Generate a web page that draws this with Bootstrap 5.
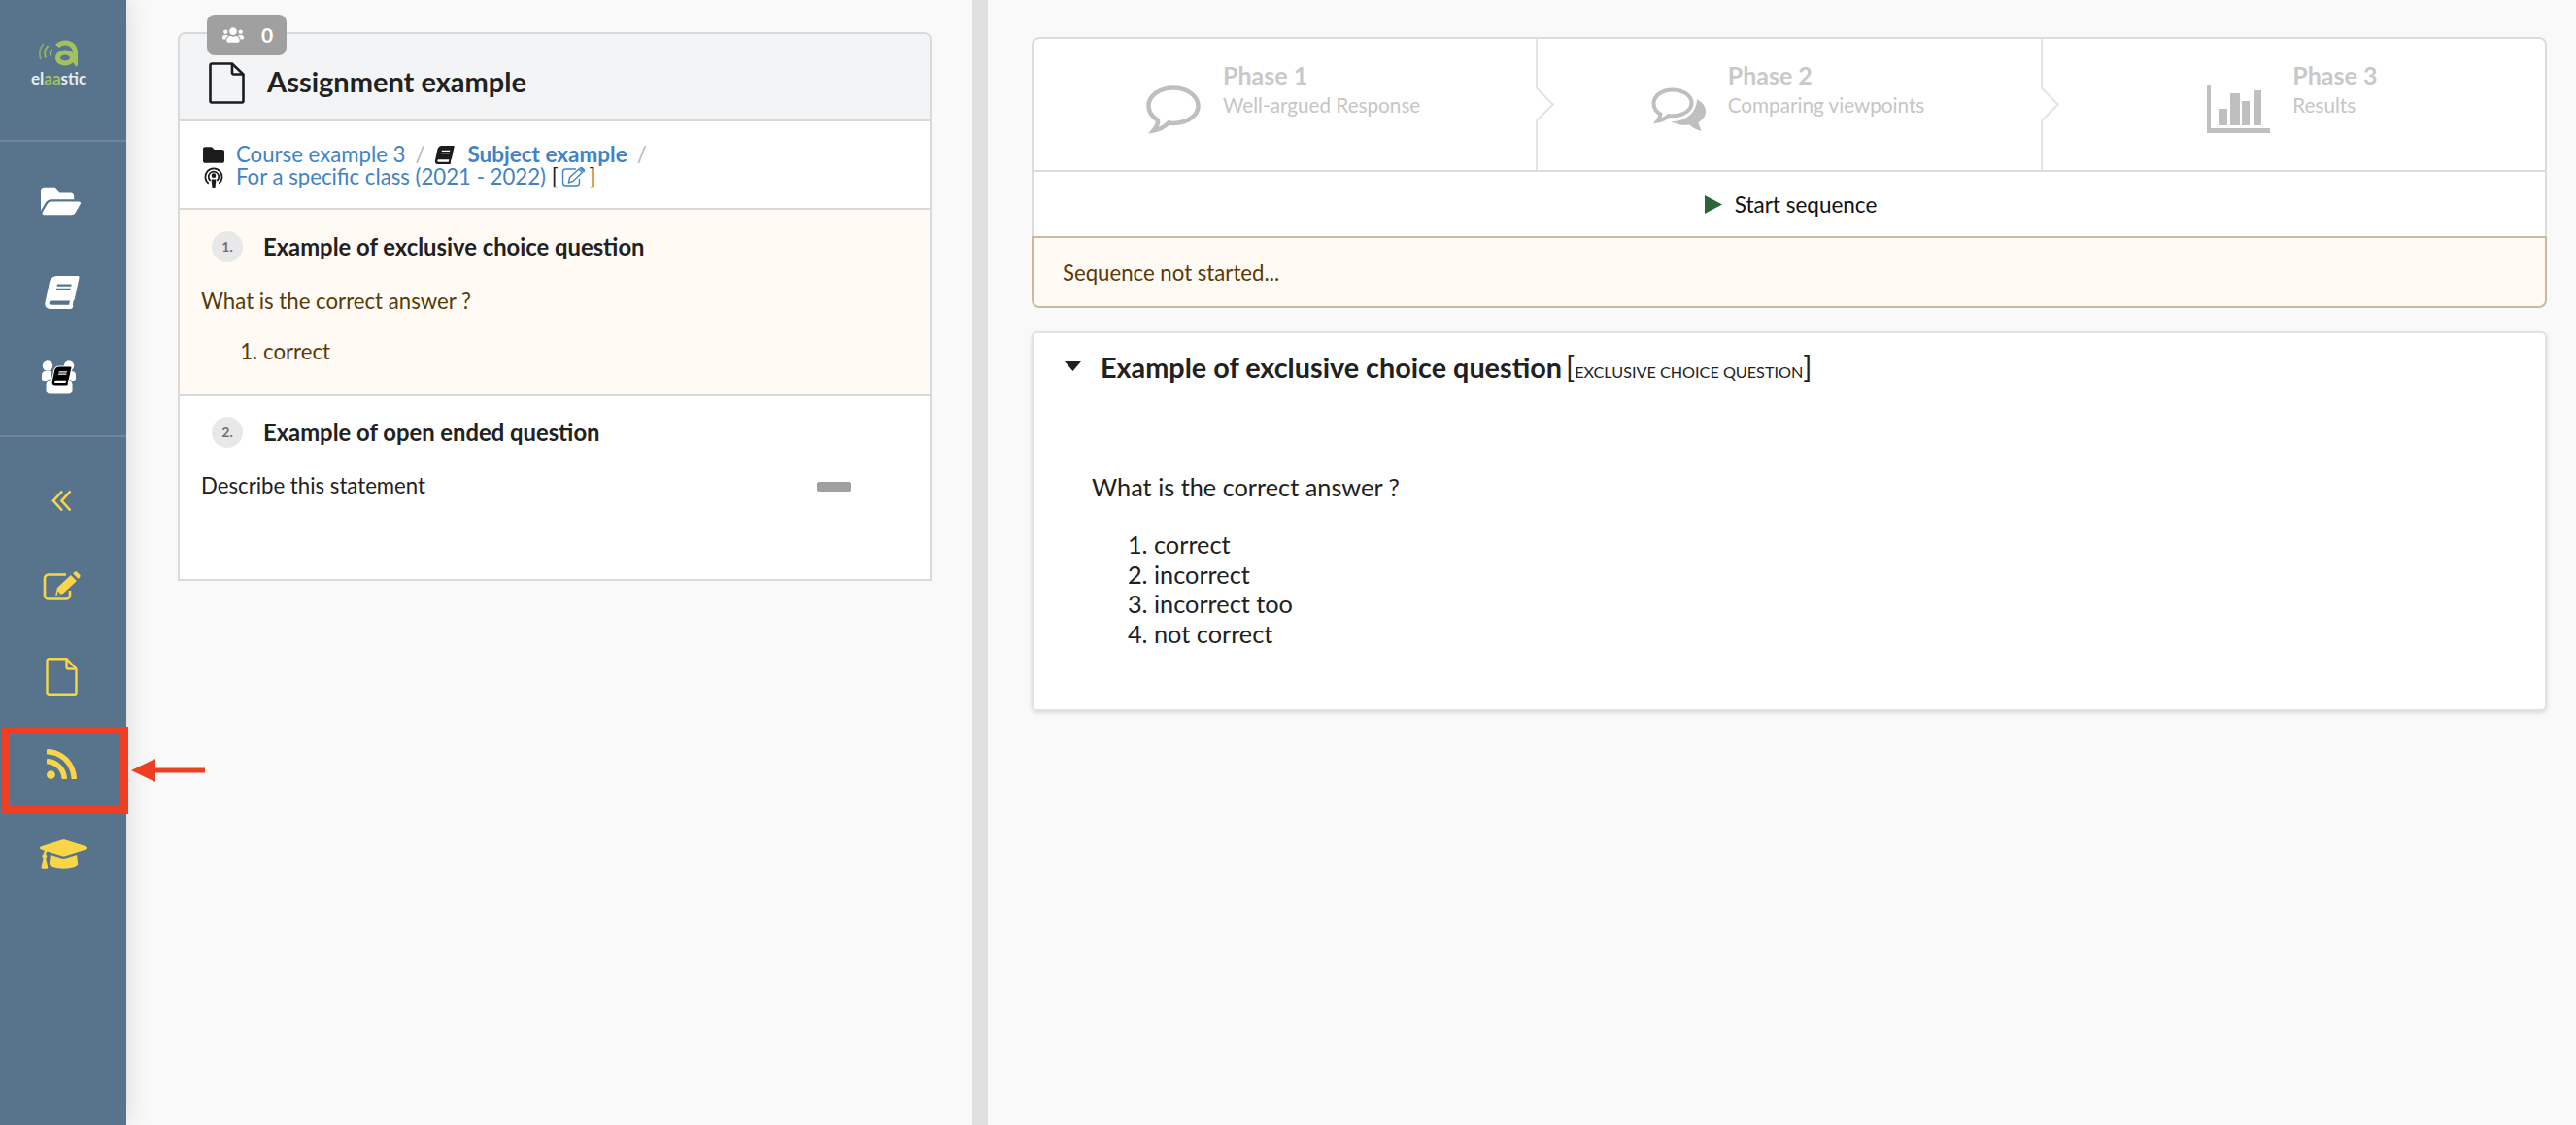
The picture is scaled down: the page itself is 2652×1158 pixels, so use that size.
<!DOCTYPE html>
<html lang="en">
<head>
<meta charset="utf-8">
<title>Assignment example</title>
<link rel="stylesheet" href="https://cdn.jsdelivr.net/npm/bootstrap@5.3.0/dist/css/bootstrap.min.css">
<style>
html,body{height:100%}
body{font-family:"Lato",sans-serif;font-size:22.2px;line-height:33px;color:#212121;background:#f9f9f9;overflow:hidden}
a{text-decoration:none;color:#4183c4}
.shell{width:2652px;height:1158px}
.sidebar{width:130px;height:1158px;background:#58748d;box-shadow:0 0 24px rgba(0,0,0,.14);z-index:2;flex:none}
.logo-zone{height:146px;border-bottom:2px solid #6e879d;padding:41px 0 0 32px}
.logo-mark{display:block;width:40px;height:28px;margin-left:8px}
.logo-word{display:block;font-size:17px;line-height:17px;font-weight:700;color:#e8edf0;margin-top:3px}
.logo-word b{color:#a3c25f;font-weight:700}
.nav-zone{height:304px;border-bottom:2px solid #6e879d}
.nv{display:block;flex:none}
.nv.w{fill:#fff}.nv.y{fill:#f9d648}
.n1{width:41px;height:31px;margin:46px 0 0 42px}
.n2{width:37px;height:34px;margin:61px 0 0 45px}
.n3{width:37px;height:35px;margin:53px 0 0 42px}
.n4{width:21px;height:23px;margin:54px 0 0 53px;fill:none!important;stroke:#f9d648;stroke-width:2.6}
.n5{width:39px;height:31px;margin:61px 0 0 44px}
.n6{width:33px;height:39px;margin:58px 0 0 47px;fill:none!important;stroke:#f9d648;stroke-width:2.4}
.n7{width:31px;height:31px;margin:55px 0 0 48px}
.n8{width:49px;height:34px;margin:60px 0 0 41px}
.left-pane{width:871px;height:1158px;flex:none;padding:33px 0 0 53px}
.split{width:16px;height:1158px;background:#e0e0e0;flex:none}
.right-pane{flex:1 1 auto;padding:38px 30px 0 45px}
.assign{width:776px;height:565px;border:2px solid #d9d9d9;border-radius:8px 8px 0 0;background:#fff;color:#212121}
.people{top:-20px;left:28px;width:82px;height:42px;background:#a0a0a0;border-radius:8px;color:#fff;font-weight:700;font-size:21px;line-height:42px;padding-left:16px;gap:18px}
.people svg{width:22px;height:20px;fill:#fff}
.head-bar{height:90px;background:#f3f4f5;border-bottom:2px solid #d9d9d9;border-radius:6px 6px 0 0;padding:10px 0 0 30px}
.head-bar svg{width:37px;height:43px;fill:none;stroke:#1b1c1d;stroke-width:2.6;margin-right:23px;margin-top:3px}
.head-bar h1{font-size:29px;line-height:36px;font-weight:700;margin:0;color:#212121}
.crumbs{height:91px;border-bottom:2px solid #d9d9d9;padding:22px 0 0 24px;font-size:22.2px;line-height:23px}
.crumbs .crow{white-space:nowrap}
.crumbs svg{display:inline-block;vertical-align:-2px;fill:#1b1c1d}
.crumbs .fw-bold{font-size:22.5px}
.ci{width:22px;height:19px;margin-right:12px}
.crumbs .podc{height:23px;vertical-align:-5px}
.cb{width:21px;height:19px;margin-right:13px}
.ce{width:24px;height:20px;margin:0 4px}
.sl{color:#b9b9b9;margin:0 10px}
.q-warn{height:192px;background:#fffaf3;border-bottom:2px solid #d9d9d9;color:#573a08}
.q-plain{height:189px}
.q-head{padding:22px 0 0 33px;gap:21px;color:#212121;font-weight:700;font-size:23.8px;line-height:32px}
.q-plain .q-head{padding-top:21px}
.num{width:32px;height:32px;border-radius:50%;background:#e8e8e8;color:#6f6f6f;font-size:14px;font-weight:700;line-height:32px;text-align:center;flex:none}
.q-text{padding:23px 0 0 22px;line-height:33px;margin:0}
.q-plain .q-text{padding-top:22px}
.q-list{margin:0;padding:20px 0 0 86px;line-height:31px}
.q-row{padding-right:81px}
.stub{width:35px;height:10px;border-radius:2px;background:#a0a0a0;margin-top:-1px}
.steps{height:139px;background:#fff;border:2px solid #dcdcdc;border-radius:8px 8px 0 0}
.stepx{flex:1 1 0;position:relative;border-right:2px solid #e4e4e4;gap:23px;padding-bottom:2px}
.stepx:last-child{border-right:0}
.stepx:not(:last-child)::after{content:"";position:absolute;top:50%;right:-14px;width:25px;height:25px;margin-top:-13px;background:#fff;border-top:2px solid #e4e4e4;border-right:2px solid #e4e4e4;transform:rotate(45deg);z-index:1}
.stepx svg{flex:none;fill:#bfbfbf;margin-top:12px}
.st-txt{margin-bottom:30px;padding-right:3px}
.st-t{font-size:25px;font-weight:700;line-height:30px;color:#c9c9c9}
.st-s{font-size:20.7px;line-height:28px;color:#c6c6c6;margin-top:2px;white-space:nowrap}
.start-row{height:66px;background:#fff;border:solid #dcdcdc;border-width:0 2px;color:#111;font-size:22.5px;gap:13px;padding-left:3px}
.tri{width:18px;height:19px;fill:#2a6535}
.msg{height:74px;background:#fffaf3;border:2px solid #c9ba9b;border-radius:0 0 8px 8px;color:#573a08;padding-left:30px}
.qcard{height:391px;margin-top:24px;background:#fff;border:2px solid #e2e2e2;border-radius:6px;box-shadow:0 2px 4px rgba(0,0,0,.13);padding:0 0 0 32px}
.qtitle{padding-top:15px;font-size:28.8px;font-weight:700;line-height:38px;color:#212121;margin:0}
.caret{width:17px;height:10px;fill:#212121;margin-right:20px;margin-top:-6px}
.qtag{font-weight:400;white-space:nowrap;margin-left:-3px;font-size:30px}
.qtag small{font-size:16.2px;text-transform:uppercase;font-weight:400;vertical-align:0}
.qbody{padding:84px 0 0 28px;font-size:25.3px;line-height:31px;color:#212121}
.qbody p{margin:0 0 28px}
.qbody ol{margin:0;padding-left:64px;line-height:30.5px}
.note-box{position:absolute;left:2px;top:748px;width:130px;height:90px;border:8px solid #ee3f24;z-index:5}
.note-arrow{position:absolute;left:135px;top:780px;width:76px;height:26px;fill:#ee3f24;z-index:5}
</style>
</head>
<body>
<div class="shell d-flex position-relative">
  <nav class="sidebar position-relative d-flex flex-column">
    <div class="logo-zone">
      <svg class="logo-mark" viewBox="0 0 40 28" fill="none" stroke="#a3c25f">
        <path d="M5 4C1 8 0 14 2 20" stroke-width="2" opacity=".6"/>
        <path d="M9.500 6C6 10 5 14 7 18.500" stroke-width="2" opacity=".8"/>
        <path d="M13.500 10c-2 2-2 4-1 6.500" stroke-width="2"/>
        <ellipse cx="27" cy="18.500" rx="7.500" ry="5.500" stroke-width="5"/>
        <path d="M19 6.500c4-5.500 18-5.500 18.500 7V21c0 2 1 3.500 2.500 5" stroke-width="5"/>
      </svg>
      <span class="logo-word">el<b>aa</b>stic</span>
    </div>
    <div class="nav-zone">
      <svg class="nv w n1" viewBox="0 64 576 384"><path d="M572.694 292.093L500.27 416.248A63.997 63.997 0 0 1 444.989 448H45.025c-18.523 0-30.064-20.093-20.731-36.093l72.424-124.155A64 64 0 0 1 152 256h399.964c18.523 0 30.064 20.093 20.73 36.093zM152 224h328v-48c0-26.51-21.49-48-48-48H272l-64-64H48C21.49 64 0 85.49 0 112v278.046l69.077-118.418C86.214 242.25 117.989 224 152 224z"/></svg>
      <svg class="nv w n2" viewBox="-20 0 560 512"><g transform="translate(90 0) skewX(-12)"><path d="M448 360V24c0-13.3-10.7-24-24-24H96C43 0 0 43 0 96v320c0 53 43 96 96 96h328c13.3 0 24-10.7 24-24v-16c0-7.5-3.5-14.3-8.9-18.7-4.2-15.4-4.2-59.3 0-74.7 5.4-4.3 8.9-11.1 8.9-18.6zM128 134c0-3.3 2.7-6 6-6h212c3.3 0 6 2.7 6 6v20c0 3.3-2.7 6-6 6H134c-3.3 0-6-2.7-6-6v-20zm0 64c0-3.3 2.7-6 6-6h212c3.3 0 6 2.7 6 6v20c0 3.3-2.7 6-6 6H134c-3.3 0-6-2.7-6-6v-20zm253.4 250H96c-17.7 0-32-14.3-32-32 0-17.6 14.4-32 32-32h285.4c-1.9 17.1-1.9 46.9 0 64z"/></g></svg>
      <svg class="nv w n3" viewBox="0 0 37 35">
        <circle cx="7" cy="5.500" r="5.200"/><circle cx="29" cy="5.500" r="5.200"/>
        <path d="M1 15c0-2.500 2-4 4-4h5l2 10H3c-1.200 0-2-.8-2-2zM26 11h6c2 0 4 1.500 4 4v4c0 1.200-.8 2-2 2h-9z"/>
        <rect x="5" y="20" width="28" height="15" rx="4.500" stroke="#58748d" stroke-width="1"/>
        <g transform="translate(15 6.500) scale(.037) skewX(-12)"><path fill="#000" stroke="#fff" stroke-width="55" paint-order="stroke" d="M448 360V24c0-13.300-10.700-24-24-24H96C43 0 0 43 0 96v320c0 53 43 96 96 96h328c13.300 0 24-10.700 24-24v-16c0-7.500-3.500-14.300-8.900-18.700-4.200-15.400-4.200-59.300 0-74.700 5.400-4.300 8.900-11.100 8.900-18.600zM128 134c0-3.300 2.700-6 6-6h212c3.300 0 6 2.700 6 6v20c0 3.300-2.700 6-6 6H134c-3.300 0-6-2.700-6-6v-20zm0 64c0-3.300 2.700-6 6-6h212c3.300 0 6 2.700 6 6v20c0 3.300-2.700 6-6 6H134c-3.300 0-6-2.700-6-6v-20zm253.400 250H96c-17.700 0-32-14.300-32-32 0-17.600 14.400-32 32-32h285.400c-1.900 17.100-1.900 46.900 0 64z"/></g>
      </svg>
    </div>
    <svg class="nv w n4" viewBox="0 0 21 23"><path d="M11 1.500L2 11.500l9 10M19.500 1.500l-9 10 9 10"/></svg>
    <svg class="nv y n5" viewBox="0 0 39 31"><path fill="none" stroke="#f9d648" stroke-width="2.600" d="M24 3.500H6A4 4 0 0 0 2 7.500v17a4 4 0 0 0 4 4h18a4 4 0 0 0 4-4V20"/><path d="M13 25l2-8L29 4l6 6-14 13zM31 2.300L33 .8c.8-.6 1.500-.6 2.200 0l3 3c.6.7.6 1.400 0 2.200L36.700 8z"/><path fill="#58748d" d="M15.500 20.500l3 3-3.500 1z"/></svg>
    <svg class="nv y n6" viewBox="0 0 33 39"><path d="M1.500 3.200a2 2 0 0 1 2-2H21.500L31.500 11.500V35.800a2 2 0 0 1-2 2H3.500a2 2 0 0 1-2-2z"/><path d="M21.500 1.200V9.500a2 2 0 0 0 2 2h8"/></svg>
    <svg class="nv y n7" viewBox="0 32 448 448"><path d="M128.081 415.959c0 35.369-28.672 64.041-64.041 64.041S0 451.328 0 415.959s28.672-64.041 64.041-64.041 64.04 28.673 64.04 64.041zm175.66 47.25c-8.354-154.6-132.185-278.587-286.95-286.95C7.656 175.765 0 183.105 0 192.253v48.069c0 8.415 6.49 15.472 14.887 16.018 111.832 7.284 201.473 96.702 208.772 208.772.547 8.397 7.604 14.887 16.018 14.887h48.069c9.149.001 16.489-7.655 15.995-16.79zm144.249.288C439.596 229.677 251.465 40.445 16.503 32.01 7.473 31.686 0 38.981 0 48.016v48.068c0 8.625 6.835 15.645 15.453 15.999 191.179 7.839 344.627 161.316 352.465 352.465.353 8.618 7.373 15.453 15.999 15.453h48.068c9.034-.001 16.329-7.474 16.005-16.504z"/></svg>
    <svg class="nv y n8" viewBox="0 64 640 384"><path d="M622.34 153.2L343.4 67.5c-15.2-4.67-31.6-4.67-46.79 0L17.66 153.2c-23.54 7.23-23.54 38.36 0 45.59l48.63 14.94c-10.67 13.19-17.23 29.28-17.88 46.9C38.78 266.15 32 276.11 32 288c0 10.78 5.68 19.85 13.86 25.65L20.33 428.53C18.11 438.52 25.71 448 35.94 448h56.11c10.24 0 17.84-9.48 15.62-19.47L82.14 313.65C90.32 307.85 96 298.78 96 288c0-11.57-6.47-21.25-15.66-26.87.76-15.02 8.44-28.3 20.69-36.72L296.6 284.5c9.06 2.78 26.44 6.25 46.79 0l278.95-85.7c23.55-7.24 23.55-38.37 0-45.6zM352.79 315.09c-28.53 8.76-52.84 3.92-65.59 0l-145.02-44.55L128 384c0 35.35 85.96 64 192 64s192-28.65 192-64l-14.18-113.47-145.03 44.56z"/></svg>
  </nav>

  <main class="left-pane">
    <div class="assign position-relative">
      <div class="people position-absolute d-flex align-items-center">
        <svg viewBox="0 32 640 448"><path d="M96 224c35.3 0 64-28.7 64-64s-28.7-64-64-64-64 28.7-64 64 28.7 64 64 64zm448 0c35.3 0 64-28.7 64-64s-28.7-64-64-64-64 28.7-64 64 28.7 64 64 64zm32 32h-64c-17.6 0-33.5 7.1-45.1 18.6 40.3 22.1 68.9 62 75.1 109.4h66c17.7 0 32-14.3 32-32v-32c0-35.3-28.7-64-64-64zm-256 0c61.9 0 112-50.1 112-112S381.9 32 320 32 208 82.1 208 144s50.1 112 112 112zm76.8 32h-8.3c-20.8 10-43.9 16-68.500 16s-47.600-6-68.500-16h-8.300C179.600 288 128 339.600 128 403.200V432c0 26.500 21.500 48 48 48h288c26.500 0 48-21.500 48-48v-28.800c0-63.600-51.600-115.200-115.200-115.200zm-223.700-13.400C161.500 263.100 145.600 256 128 256H64c-35.300 0-64 28.700-64 64v32c0 17.700 14.300 32 32 32h65.900c6.300-47.400 34.900-87.300 75.200-109.400z"/></svg>
        <span>0</span>
      </div>
      <div class="head-bar d-flex align-items-center">
        <svg viewBox="0 0 37 43"><path d="M1.500 3a1.500 1.500 0 0 1 1.500-1.500H24L35.500 12.500V40a1.500 1.500 0 0 1-1.500 1.500H3A1.500 1.500 0 0 1 1.500 40z"/><path d="M24 1.500V11a1.500 1.500 0 0 0 1.500 1.500h10"/></svg>
        <h1>Assignment example</h1>
      </div>
      <div class="crumbs">
        <div class="crow">
          <svg class="ci" viewBox="0 64 512 384"><path d="M464 128H272l-64-64H48C21.490 64 0 85.490 0 112v288c0 26.510 21.490 48 48 48h416c26.510 0 48-21.490 48-48V176c0-26.510-21.490-48-48-48z"/></svg><a href="#">Course example 3</a><span class="sl">/</span><svg class="cb" viewBox="-20 0 560 512"><g transform="translate(90 0) skewX(-12)"><path d="M448 360V24c0-13.300-10.700-24-24-24H96C43 0 0 43 0 96v320c0 53 43 96 96 96h328c13.300 0 24-10.700 24-24v-16c0-7.500-3.500-14.300-8.900-18.700-4.200-15.400-4.200-59.300 0-74.700 5.400-4.300 8.900-11.100 8.900-18.600zM128 134c0-3.300 2.700-6 6-6h212c3.300 0 6 2.700 6 6v20c0 3.300-2.700 6-6 6H134c-3.300 0-6-2.700-6-6v-20zm0 64c0-3.300 2.700-6 6-6h212c3.300 0 6 2.700 6 6v20c0 3.300-2.700 6-6 6H134c-3.300 0-6-2.700-6-6v-20zm253.400 250H96c-17.700 0-32-14.300-32-32 0-17.600 14.400-32 32-32h285.400c-1.900 17.100-1.900 46.900 0 64z"/></g></svg><a href="#" class="fw-bold">Subject example</a><span class="sl">/</span>
        </div>
        <div class="crow">
          <svg class="ci podc" viewBox="0 0 22 24"><g fill="none" stroke="#1b1c1d" stroke-width="1.800"><path d="M5.500 17.500a9 9 0 1 1 11 0"/><path d="M7.500 14.500a5.500 5.500 0 1 1 7 0"/></g><circle cx="11" cy="9" r="2.400"/><path d="M8.500 13h5l-1 10h-3z"/></svg><a href="#">For a specific class (2021 - 2022)</a> [<svg class="ce" viewBox="0 0 24 20"><path fill="none" stroke="#4183c4" stroke-width="1.400" d="M15 2H4.500A3 3 0 0 0 1.500 5v11a3 3 0 0 0 3 3h11a3 3 0 0 0 3-3v-4"/><path fill="none" stroke="#4183c4" stroke-width="1.400" d="M8.500 10.500L18 2l3.500 3.500-9.500 9-4.500 1.500zM19.500 1l1.500-.5 2.500 2.500-.5 1.500z"/></svg>]
        </div>
      </div>
      <section class="q-warn">
        <div class="q-head d-flex align-items-center"><span class="num">1.</span><span>Example of exclusive choice question</span></div>
        <p class="q-text">What is the correct answer ?</p>
        <ol class="q-list"><li>correct</li></ol>
      </section>
      <section class="q-plain">
        <div class="q-head d-flex align-items-center"><span class="num">2.</span><span>Example of open ended question</span></div>
        <div class="q-row d-flex align-items-center justify-content-between"><p class="q-text">Describe this statement</p><span class="stub mt-4"></span></div>
      </section>
    </div>
  </main>

  <div class="split"></div>

  <main class="right-pane">
    <div class="steps d-flex">
      <div class="stepx d-flex align-items-center justify-content-center">
        <svg width="56" height="50" viewBox="0 0 56 50"><path fill="none" stroke="#bfbfbf" stroke-width="4.500" d="M28 2.500C13.500 2.500 2.500 10.500 2.500 21c0 6.500 4 11.500 9.500 15 .5 3.500-2 7.500-4.500 10.500 7-1 12-4.500 15.500-8 1.500.2 3.500.4 5 .4 14.500 0 25.500-8 25.500-17.900S42.500 2.500 28 2.500z"/></svg>
        <div class="st-txt"><div class="st-t">Phase 1</div><div class="st-s">Well-argued Response</div></div>
      </div>
      <div class="stepx d-flex align-items-center justify-content-center">
        <svg width="56" height="46" viewBox="0 0 56 46"><path d="M47 12c5 3 9 7 9 12.500 0 5-3 9-7.500 11.500.5 3 2 6.500 3.500 9-5-1-9.500-3.500-12.500-6.500-9.500 1-14.500-1-19-3.500 11 .5 26-6 26.500-23z"/><path fill="none" stroke="#bfbfbf" stroke-width="4" d="M22 2.500C11 2.500 2.500 8.500 2.500 16.500c0 4.500 2.500 8.500 7 11-.3 2.500-1.500 5-3 7 5-.8 9-3.300 11.500-5.500 1.500.2 2.500.3 4 .3 11 0 19.500-5.800 19.500-13.300S33 2.500 22 2.500z"/></svg>
        <div class="st-txt"><div class="st-t">Phase 2</div><div class="st-s">Comparing viewpoints</div></div>
      </div>
      <div class="stepx d-flex align-items-center justify-content-center">
        <svg width="65" height="49" viewBox="0 0 65 49"><path d="M0 0h4v44h61v5H0zM12 24h9v17h-9zM24 8h10v33H24zM36 16h8v25h-8zM48 5h8v36h-8z"/></svg>
        <div class="st-txt"><div class="st-t">Phase 3</div><div class="st-s">Results</div></div>
      </div>
    </div>
    <div class="start-row d-flex align-items-center justify-content-center">
      <svg class="tri" viewBox="0 0 18 19"><path d="M0 0l18 9.500L0 19z"/></svg><span>Start sequence</span>
    </div>
    <div class="msg d-flex align-items-center">Sequence not started...</div>

    <article class="qcard">
      <h2 class="qtitle d-flex align-items-center">
        <svg class="caret" viewBox="0 0 17 10"><path d="M0 0h17l-8.500 10z"/></svg>
        <span>Example of exclusive choice question <span class="qtag">[<small>Exclusive choice question</small>]</span></span>
      </h2>
      <div class="qbody">
        <p>What is the correct answer ?</p>
        <ol><li>correct</li><li>incorrect</li><li>incorrect too</li><li>not correct</li></ol>
      </div>
    </article>
  </main>

  <div class="note-box"></div>
  <svg class="note-arrow" viewBox="0 0 76 26"><path d="M0 13L25 1v9.500h51v5H25V25z"/></svg>
</div>
<script src="https://cdn.jsdelivr.net/npm/bootstrap@5.3.0/dist/js/bootstrap.bundle.min.js"></script>
</body>
</html>
